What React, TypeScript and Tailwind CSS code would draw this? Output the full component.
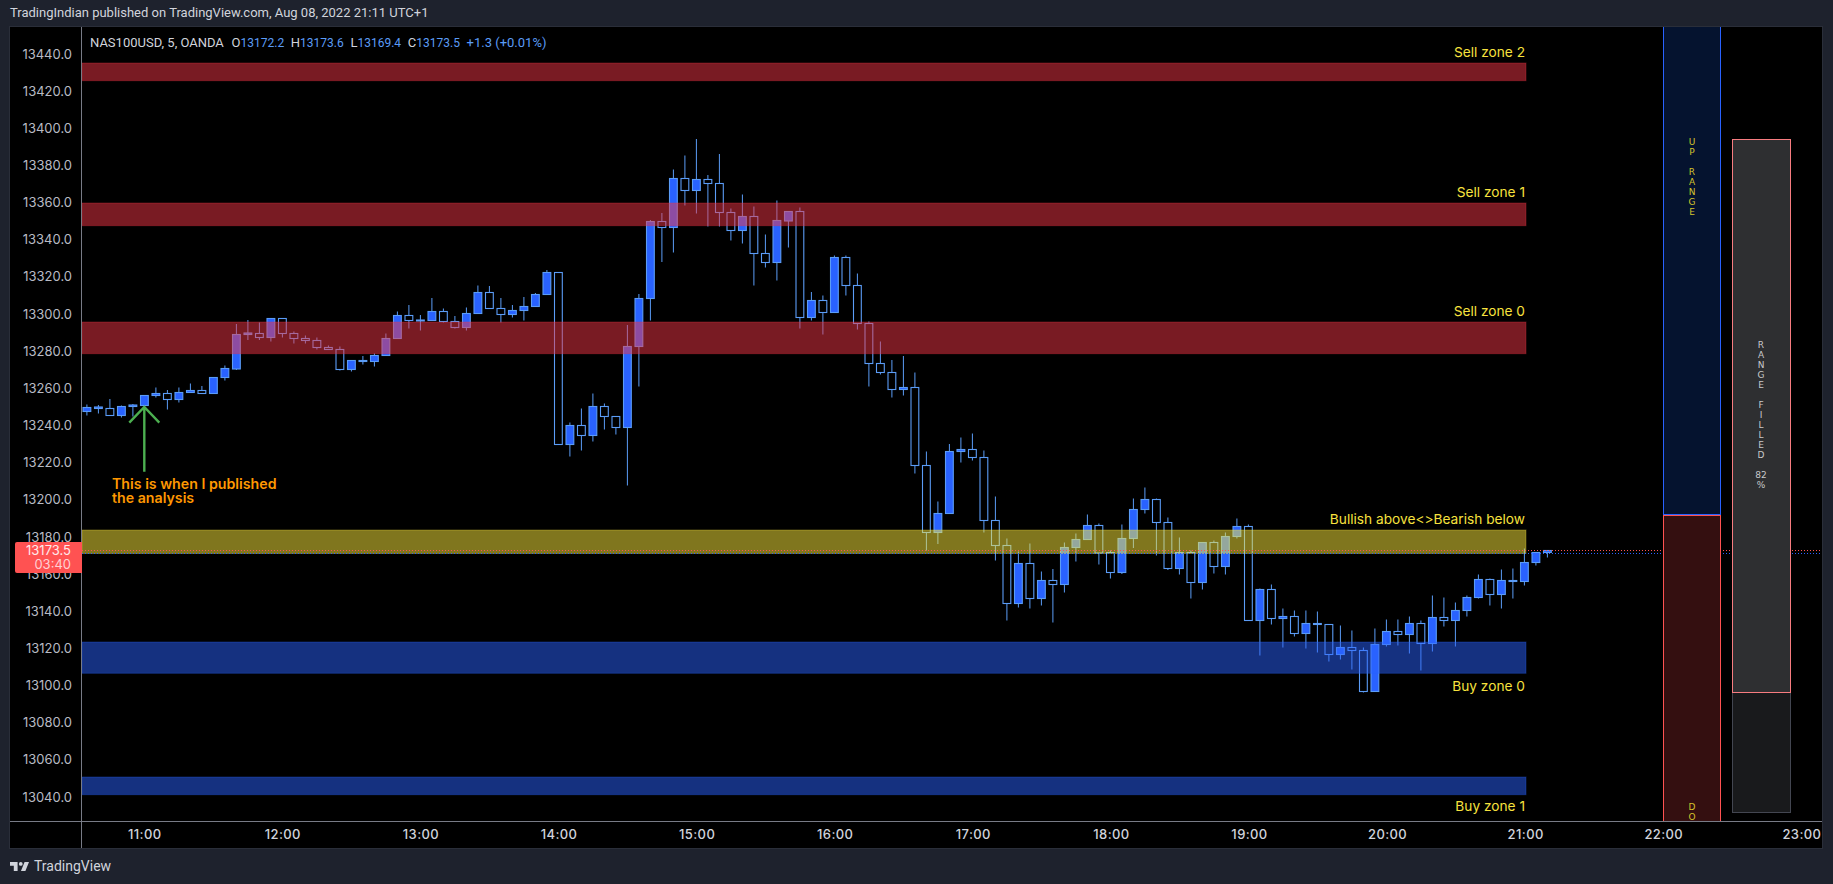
import React from 'react';

// [wickTop, bodyTop, bodyBottom, wickBottom, filled], screen y, first bar sits 5 bars left of 11:00
type Bar = [number, number, number, number, number];

const bars: Bar[] = [
  [404.5, 407.5, 411.5, 415.5, 1], [405, 407, 408.5, 413.5, 1], [399, 408.5, 415.5, 415.5, 0], [405.5, 406.5, 415.5, 417.5, 1],
  [404, 405, 406.5, 416.5, 1], [395.5, 395.5, 405.5, 408.5, 1], [387.5, 393.5, 395.5, 397.5, 1], [390, 393.5, 399.5, 409.5, 0],
  [387.5, 392.5, 399.5, 402.5, 1], [383.5, 390.5, 392.5, 392.5, 1], [386, 390.5, 393.5, 393.5, 0], [377.5, 377.5, 393.5, 393.5, 1],
  [365.5, 368.5, 377.5, 380.5, 1], [324, 334.5, 369, 370, 1], [320, 333, 334.5, 340, 1], [322.5, 333.5, 337.5, 340, 0],
  [318.5, 318.5, 337.5, 341.5, 1], [318.5, 318.5, 333.5, 337.5, 0], [331.5, 333.5, 338.5, 343.5, 0], [335.5, 338.5, 340.5, 343.5, 0],
  [337.5, 340.5, 347.5, 349.5, 0], [345.5, 347.5, 349.5, 349.5, 0], [346.5, 349.5, 369.5, 370.5, 0], [360.5, 360.5, 369.5, 371.5, 1],
  [356, 360.5, 361.5, 364.5, 1], [353.5, 355.5, 361.5, 366.5, 1], [333.5, 338.5, 355.5, 355.5, 1], [311.5, 315.5, 338.5, 338.5, 1],
  [305, 315.5, 320.5, 328.5, 0], [315, 320, 321, 330.5, 0], [298, 311.5, 320.5, 320.5, 1], [308.5, 311.5, 321.5, 322.5, 0],
  [316, 321.5, 327.5, 328.5, 0], [307.5, 313.5, 327.5, 330.5, 1], [285.5, 292.5, 313.5, 313.5, 1], [286, 292.5, 308.5, 308.5, 0],
  [298, 308.5, 314.5, 322.5, 0], [305, 310.5, 314.5, 317.5, 1], [297, 306.5, 310.5, 320.5, 1], [293, 294.5, 306.5, 306.5, 1],
  [270, 272.5, 294.5, 294.5, 1], [272.5, 272.5, 444.5, 444.5, 0], [422.5, 425.5, 444.5, 456.5, 1], [408.5, 425.5, 435.5, 450.5, 0],
  [393.5, 406.5, 435.5, 441.5, 1], [403.5, 406.5, 416.5, 429.5, 0], [416.5, 416.5, 427.5, 434.5, 0], [325, 346.5, 427.5, 485.5, 1],
  [294, 298.5, 346.5, 386.5, 1], [220, 221.5, 298.5, 320.5, 1], [213, 221.5, 227.5, 262, 0], [169.5, 178.5, 227.5, 252.5, 1],
  [155.5, 178.5, 190.5, 205.5, 0], [139, 179.5, 190.5, 213.5, 1], [175, 179.5, 183.5, 226.5, 0], [154, 183.5, 212.5, 226.5, 0],
  [208.5, 212.5, 230.5, 240.5, 0], [194.5, 216.5, 230.5, 243.5, 1], [206.5, 216.5, 253.5, 285.5, 0], [234.5, 253.5, 262.5, 267.5, 0],
  [200.5, 220.5, 262.5, 280.5, 1], [211.5, 211.5, 221, 247.5, 1], [207.5, 211.5, 317.5, 328.5, 0], [292, 300.5, 317.5, 320.5, 1],
  [295.5, 300.5, 312.5, 334.5, 0], [255.5, 257.5, 312.5, 312.5, 1], [255.5, 257.5, 285.5, 295.5, 0], [273.5, 285.5, 323.5, 329.5, 0],
  [321.5, 323.5, 363.5, 386.5, 0], [341.5, 363.5, 372.5, 374.5, 0], [360, 372.5, 389.5, 397.5, 0], [356, 387.5, 389.5, 395.5, 1],
  [372.5, 387.5, 465.5, 473.5, 0], [451.5, 465.5, 532.5, 550.5, 0], [501.5, 513.5, 532.5, 544, 1], [444, 451.5, 513.5, 513.5, 1],
  [437.5, 449.5, 451.5, 462.5, 1], [433.5, 449.5, 457.5, 460.5, 0], [450.5, 457.5, 520.5, 532.5, 0], [496.5, 520.5, 545.5, 560.5, 0],
  [538.5, 545.5, 603.5, 620.5, 0], [551.5, 563.5, 603.5, 607.5, 1], [543.5, 563.5, 598.5, 608.5, 0], [571.5, 580.5, 598.5, 605.5, 1],
  [569, 580.5, 584.5, 622.5, 0], [542.5, 547.5, 584.5, 592.5, 1], [533.5, 539.5, 547.5, 561.5, 1], [514.5, 525.5, 539.5, 539.5, 1],
  [523.5, 525.5, 553, 564.5, 0], [550.5, 552.5, 572.5, 578.5, 0], [524.5, 538.5, 572.5, 574, 1], [498.5, 509.5, 538.5, 548, 1],
  [487.5, 499.5, 509.5, 513.5, 1], [498.5, 499.5, 522.5, 555.5, 0], [517.5, 522.5, 568.5, 570, 0], [537.5, 552.5, 568.5, 574.5, 1],
  [550.5, 552.5, 582.5, 598.5, 0], [542.5, 542.5, 582.5, 589.5, 1], [540.5, 542.5, 566.5, 573.5, 0], [532.5, 536.5, 566.5, 574.5, 1],
  [518.5, 526.5, 536.5, 538.5, 1], [524.5, 526.5, 620.5, 620.5, 0], [588.5, 589.5, 620.5, 655.5, 1], [584.5, 589.5, 618.5, 624.5, 0],
  [608.5, 616.5, 618.5, 647.5, 1], [610.5, 616.5, 633.5, 636.5, 0], [610.5, 623.5, 633.5, 648.5, 1], [611.5, 623.5, 624.5, 652.5, 1],
  [624.5, 624.5, 654.5, 661.5, 0], [625.5, 647.5, 654.5, 659.5, 1], [630.5, 647.5, 650.5, 669.5, 0], [647.5, 650.5, 691.5, 692.5, 0],
  [628.5, 644.5, 691.5, 691.5, 1], [619.5, 631.5, 644.5, 646.5, 1], [619.5, 631.5, 634.5, 645.5, 0], [616.5, 623.5, 634.5, 653.5, 1],
  [620.5, 623.5, 643.5, 670.5, 0], [595.5, 617.5, 643.5, 651.5, 1], [597.5, 617.5, 620.5, 626.5, 0], [602.5, 610.5, 620.5, 646.5, 1],
  [595.5, 597.5, 610.5, 616.5, 1], [574.5, 579.5, 597.5, 598.5, 1], [578.5, 579.5, 594.5, 605.5, 0], [569.5, 580.5, 594.5, 608.5, 1],
  [568.5, 580.5, 581.5, 598.5, 1], [548.5, 562.5, 581.5, 585.5, 1], [552.5, 552.5, 562.5, 565.5, 1], [550.5, 550.5, 552.5, 557.5, 1],
];

const prices = ['13440.0', '13420.0', '13400.0', '13380.0', '13360.0', '13340.0', '13320.0', '13300.0', '13280.0', '13260.0', '13240.0', '13220.0', '13200.0', '13180.0', '13160.0', '13140.0', '13120.0', '13100.0', '13080.0', '13060.0', '13040.0'];
const hours = ['11:00', '12:00', '13:00', '14:00', '15:00', '16:00', '17:00', '18:00', '19:00', '20:00', '21:00', '22:00', '23:00'];

const zones = [
  { y: 63, h: 17.7, color: '#f23645' },
  { y: 203, h: 22.7, color: '#f23645' },
  { y: 322, h: 31.7, color: '#f23645' },
  { y: 530, h: 23.5, color: '#ffeb3b' },
  { y: 642, h: 31.3, color: '#2962ff' },
  { y: 777, h: 17.7, color: '#2962ff' },
];

const zoneLabels = [
  { text: 'Sell zone 2', cls: 'top-[17px]' },
  { text: 'Sell zone 1', cls: 'top-[157px]' },
  { text: 'Sell zone 0', cls: 'top-[276px]' },
  { text: 'Bullish above<>Bearish below', cls: 'top-[484px]' },
  { text: 'Buy zone 0', cls: 'top-[651px]' },
  { text: 'Buy zone 1', cls: 'top-[771px]' },
];

const ohlc = [
  ['O', '13172.2'],
  ['H', '13173.6'],
  ['L', '13169.4'],
  ['C', '13173.5'],
];

function Chart() {
  return (
    <svg className="absolute inset-0" width="1740" height="794" viewBox="82 27 1740 794">
      {bars.map(([wt, bt, bb, wb, filled], k) => {
        const x = 144.4 + (k - 5) * 11.5;
        return (
          <g key={k}>
            <line x1={x} x2={x} y1={wt} y2={wb} stroke="#5b9cf6" strokeWidth="1" />
            <rect x={x - 3.9} y={bt} width="7.8" height={bb - bt} fill={filled ? '#2962ff' : '#000'} stroke="#5b9cf6" strokeWidth="1.1" />
          </g>
        );
      })}
      {zones.map((z) => (
        <rect key={z.y} x="82" y={z.y} width="1444" height={z.h} fill={z.color} fillOpacity="0.5" stroke={z.color} strokeOpacity="0.3" strokeWidth="1" />
      ))}

      <line x1="82" x2="1822" y1="550.5" y2="550.5" stroke="#ff5252" strokeWidth="1.2" strokeDasharray="1 2" />
      <line x1="82" x2="1822" y1="553.5" y2="553.5" stroke="#2962ff" strokeWidth="1.2" strokeDasharray="1 2" />

      {/* published arrow */}
      <path d="M144.3 471.7V407M129.3 422.7L144.3 407L159.3 422.7" fill="none" stroke="#4caf50" strokeWidth="2.4" />

      {/* up / down range */}
      <rect x="1663.5" y="26" width="57" height="488.5" fill="#05132f" stroke="#2962ff" strokeWidth="1" />
      <rect x="1663.5" y="515.5" width="57" height="306" fill="#340f10" stroke="#ff5252" strokeWidth="1" />

      {/* range filled */}
      <rect x="1732.5" y="139.5" width="58" height="673" fill="#191a1c" stroke="#434651" strokeWidth="1" />
      <rect x="1732.5" y="139.5" width="58" height="553" fill="#2e2f31" stroke="#f77c80" strokeWidth="1" />
    </svg>
  );
}

export default function App() {
  return (
    <div className="w-[1833px] h-[884px] overflow-hidden flex flex-col bg-[#1e222d] font-['Inter',sans-serif]">
      <div className="h-[26px] shrink-0 pl-[10px] flex items-center font-['Roboto',sans-serif] text-[13px] text-[#d1d4dc]">
        TradingIndian published on TradingView.com, Aug 08, 2022 21:11 UTC+1
      </div>

      <div className="ml-[9px] w-[1814px] h-[823px] shrink-0 border border-[#2a2e39] bg-black flex flex-col">
        <div className="relative h-[794px] shrink-0 flex">
          <div className="w-[72px] shrink-0 border-r border-[#787b86] pt-[8.7px] pr-[9px] text-[13px] text-[#b8bbc4]">
            {prices.map((p) => (
              <div key={p} className="h-[37.17px] flex items-center justify-end">{p}</div>
            ))}
          </div>

          <div className="relative flex-1 overflow-hidden">
            <Chart />

            {/* legend */}
            <div className="absolute left-[8px] top-[7px] flex gap-[6.7px] font-['Roboto',sans-serif] text-[13px] leading-[18px] text-[#d1d4dc] whitespace-nowrap">
              <span className="mr-[1px]">NAS100USD, 5, OANDA</span>
              {ohlc.map(([k, v]) => (
                <span key={k}>{k}<span className="text-[12px] text-[#5b9cf6]">{v}</span></span>
              ))}
              <span className="text-[#5b9cf6]">+1.3 (+0.01%)</span>
            </div>

            {zoneLabels.map((l) => (
              <div key={l.text} className={`absolute right-[297px] leading-[16px] text-[13.7px] text-[#f7e23e] whitespace-nowrap ${l.cls}`}>
                {l.text}
              </div>
            ))}

            <div className="absolute left-[30px] top-[450px] w-[200px] text-[14.2px] leading-[14.3px] font-semibold text-[#ff9800]">
              This is when I published<br />the analysis
            </div>

            <div className="absolute left-[1600px] top-[110px] w-[20px] text-center font-['DejaVu_Sans',sans-serif] text-[9px] leading-[10px] text-[#d4c32c] whitespace-pre-line">
              {'U\nP\n\nR\nA\nN\nG\nE'}
            </div>
            <div className="absolute left-[1600px] top-[775px] w-[20px] text-center font-['DejaVu_Sans',sans-serif] text-[9px] leading-[10px] text-[#d4c32c] whitespace-pre-line">
              {'D\nO'}
            </div>
            <div className="absolute left-[1669px] top-[313px] w-[20px] text-center font-['DejaVu_Sans',sans-serif] text-[9px] leading-[10px] text-[#c8c9cb] whitespace-pre-line">
              {'R\nA\nN\nG\nE\n\nF\nI\nL\nL\nE\nD\n\n82\n%'}
            </div>
          </div>

          {/* last price tag */}
          <div className="absolute left-[5px] top-[515px] w-[67px] h-[31px] rounded-l-[2px] bg-[#ff5252] pr-[11px] text-right text-[13px] leading-[14px] pt-[1px]">
            <div className="text-[#ffe9ea]">13173.5</div>
            <div className="text-[#ffd0d2]">03:40</div>
          </div>
        </div>

        <div className="flex-1 flex border-t border-[#787b86] overflow-hidden">
          <div className="w-[72px] shrink-0 border-r border-[#787b86]" />
          <div className="flex -ml-[6.3px] items-center text-[13px] font-medium tracking-[0.4px] text-[#d1d4dc]">
            {hours.map((h) => (
              <div key={h} className="w-[138.1px] shrink-0 text-center">{h}</div>
            ))}
          </div>
        </div>
      </div>

      <div className="flex-1 pl-[10px] flex items-center gap-[5px] font-['Roboto',sans-serif] text-[14px] text-[#d1d4dc]">
        <svg width="19" height="9.5" viewBox="2 2 30 15" fill="#d1d4dc">
          <path d="M14 2H2v6h6v9h6V2Zm12 15h-7l6-15h7l-6 15Zm-7-9a3 3 0 1 0 0-6 3 3 0 0 0 0 6Z" />
        </svg>
        TradingView
      </div>
    </div>
  );
}
